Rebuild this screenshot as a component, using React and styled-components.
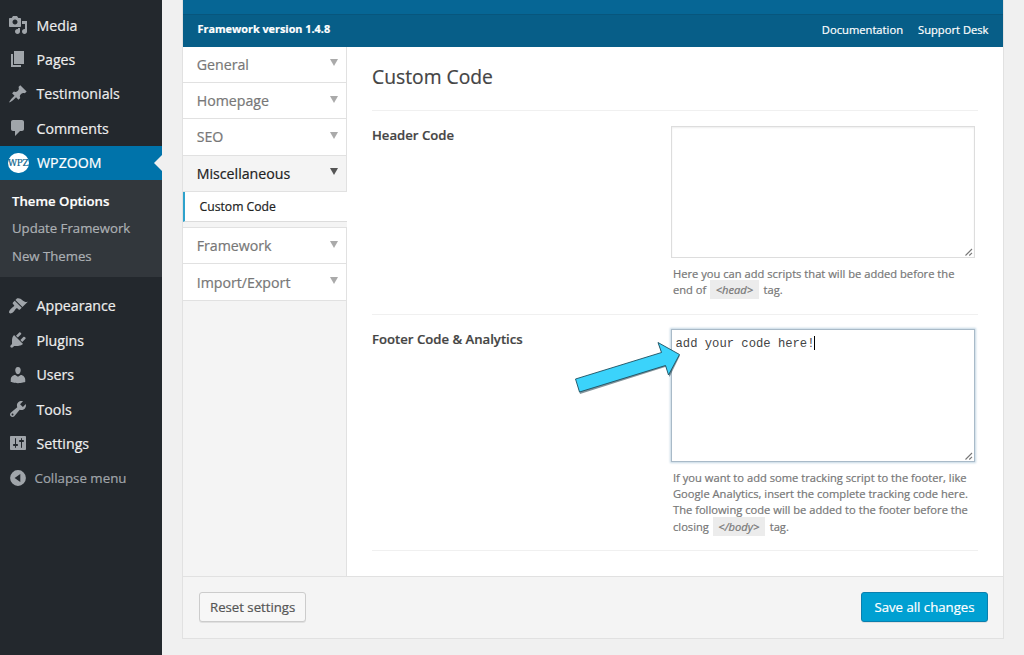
import styled, { createGlobalStyle } from 'styled-components';

const icons = {
    media: 'M13 11V4c0-.55-.45-1-1-1h-1.67L9 1H5L3.67 3H2c-.55 0-1 .45-1 1v7c0 .55.45 1 1 1h10c.55 0 1-.45 1-1zM7 4.5c1.38 0 2.5 1.12 2.5 2.5S8.38 9.5 7 9.5 4.5 8.38 4.5 7 5.62 4.5 7 4.5zM14 6h5v10.5c0 1.38-1.12 2.5-2.5 2.5S14 17.88 14 16.5s1.12-2.5 2.5-2.5c.17 0 .34.02.5.05V9h-3V6zm-4 8.05V13h2v3.5c0 1.38-1.12 2.5-2.5 2.5S7 17.88 7 16.5 8.12 14 9.5 14c.17 0 .34.02.5.05z',
    pages: 'M6 15V2h10v13H6zm-1 1h8v2H3V5h2v11z',
    pin: 'M10.44 3.02l1.82-1.82 6.36 6.35-1.83 1.82c-1.05-.68-2.48-.57-3.41.36l-.75.75c-.92.93-1.04 2.35-.35 3.41l-1.83 1.82-2.41-2.41-2.8 2.79c-.42.42-3.38 2.71-3.8 2.29s1.86-3.39 2.28-3.81l2.79-2.79L4.1 9.36l1.83-1.82c1.05.69 2.48.57 3.4-.36l.75-.75c.93-.92 1.05-2.35.36-3.41z',
    comments: 'M5 2h9c1.1 0 2 .9 2 2v7c0 1.1-.9 2-2 2h-2l-5 5v-5H5c-1.1 0-2-.9-2-2V4c0-1.1.9-2 2-2z',
    appearance: 'M14.48 11.06L7.41 3.99l1.5-1.5c.5-.56 2.3-.47 3.51.32 1.21.8 1.43 1.28 2.91 2.1 1.18.64 2.45 1.26 4.45.85zm-.71.71L6.7 4.7 4.93 6.47c-.39.39-.39 1.02 0 1.41l1.06 1.06c.39.39.39 1.03 0 1.42-.6.6-1.43 1.11-2.21 1.69-.35.26-.7.53-1.01.84C1.43 14.23.4 16.08 1.4 17.07c.99 1 2.84-.03 4.18-1.36.31-.31.58-.66.85-1.02.57-.78 1.08-1.61 1.69-2.21.39-.39 1.02-.39 1.41 0l1.06 1.06c.39.39 1.02.39 1.41 0z',
    plugins: 'M13.11 4.36L9.87 7.6 8 5.73l3.24-3.24c.35-.34 1.05-.2 1.56.32.52.51.66 1.21.31 1.55zm-8 1.77l.91-1.12 9.01 9.01-1.19.84c-.71.71-2.63 1.16-3.82 1.16H6.14L4.9 17.26c-.59.59-1.54.59-2.12 0-.59-.58-.59-1.53 0-2.12l1.24-1.24v-3.88c0-1.13.4-3.19 1.09-3.89zm7.26 3.97l3.24-3.24c.34-.35 1.04-.21 1.55.31.52.51.66 1.21.31 1.55l-3.24 3.25z',
    users: 'M10 9.25c-2.27 0-2.73-3.44-2.73-3.44C7 4.02 7.82 2 9.97 2c2.16 0 2.98 2.02 2.71 3.81 0 0-.41 3.44-2.68 3.44zm0 2.57L12.72 10c2.39 0 4.52 2.33 4.52 4.53v2.49s-3.65 1.13-7.24 1.13c-3.65 0-7.24-1.13-7.24-1.13v-2.49c0-2.25 1.94-4.48 4.47-4.48z',
    tools: 'M16.68 9.77c-1.34 1.34-3.3 1.67-4.95.99l-5.41 6.52c-.99.99-2.59.99-3.58 0s-.99-2.59 0-3.57l6.52-5.42c-.68-1.65-.35-3.61.99-4.95 1.28-1.28 3.12-1.62 4.72-1.06l-2.89 2.89 2.82 2.82 2.86-2.87c.53 1.58.18 3.39-1.08 4.65zM3.81 16.21c.4.39 1.04.39 1.43 0 .4-.4.4-1.04 0-1.43-.39-.4-1.03-.4-1.43 0-.39.39-.39 1.03 0 1.43z',
    settings: 'M18 16V4c0-.55-.45-1-1-1H3c-.55 0-1 .45-1 1v12c0 .55.45 1 1 1h14c.55 0 1-.45 1-1zM8 11h1c.55 0 1 .45 1 1s-.45 1-1 1H8v1.5c0 .28-.22.5-.5.5s-.5-.22-.5-.5V13H6c-.55 0-1-.45-1-1s.45-1 1-1h1V5.5c0-.28.22-.5.5-.5s.5.22.5.5V11zm5-2h-1c-.55 0-1-.45-1-1s.45-1 1-1h1V5.5c0-.28.22-.5.5-.5s.5.22.5.5V7h1c.55 0 1 .45 1 1s-.45 1-1 1h-1v5.5c0 .28-.22.5-.5.5s-.5-.22-.5-.5V9z',
    collapse: 'M10 2.1a7.9 7.9 0 1 0 0 15.8 7.9 7.9 0 0 0 0-15.8zM12.3 6v8L6.6 10z',
};

const topMenu = [
    { icon: 'media', label: 'Media' },
    { icon: 'pages', label: 'Pages' },
    { icon: 'pin', label: 'Testimonials' },
    { icon: 'comments', label: 'Comments' },
];

const bottomMenu = [
    { icon: 'appearance', label: 'Appearance' },
    { icon: 'plugins', label: 'Plugins' },
    { icon: 'users', label: 'Users' },
    { icon: 'tools', label: 'Tools' },
    { icon: 'settings', label: 'Settings' },
];

const Icon = ({ name }) => (
    <MenuIcon viewBox="0 0 20 20">
        <path fillRule="evenodd" d={icons[name]} />
    </MenuIcon>
);

const MenuEntry = ({ icon, label }) => (
    <MenuItem>
        <Icon name={icon} />
        {label}
    </MenuItem>
);

const Tab = ({ label, active }) => (
    <TabItem $active={active}>
        {label}
        <TabArrow $active={active} />
    </TabItem>
);

const ResizeGrip = () => (
    <Grip viewBox="0 0 8 8">
        <path d="M0.5 7.5L7 1M4.3 7.5L7 4.8" fill="none" stroke="#777" strokeWidth="1.1" />
    </Grip>
);

const App = () => {
    return (
        <Page>
            <GlobalStyle />
            <AdminMenu>
                {topMenu.map((item) => <MenuEntry key={item.label} {...item} />)}
                <MenuItem $current>
                    <Logo>WPZ</Logo>
                    WPZOOM
                    <Notch />
                </MenuItem>
                <Submenu>
                    <SubmenuItem $current>Theme Options</SubmenuItem>
                    <SubmenuItem>Update Framework</SubmenuItem>
                    <SubmenuItem>New Themes</SubmenuItem>
                </Submenu>
                {bottomMenu.map((item) => <MenuEntry key={item.label} {...item} />)}
                <CollapseItem>
                    <Icon name="collapse" />
                    Collapse menu
                </CollapseItem>
            </AdminMenu>

            <Panel>
                <PanelTop />
                <PanelHeader>
                    <Version>Framework version 1.4.8</Version>
                    <HeaderLinks>
                        <HeaderLink>Documentation</HeaderLink>
                        <HeaderLink>Support Desk</HeaderLink>
                    </HeaderLinks>
                </PanelHeader>
                <PanelBody>
                    <Tabs>
                        <Tab label="General" />
                        <Tab label="Homepage" />
                        <Tab label="SEO" />
                        <Tab label="Miscellaneous" active />
                        <SubTab>Custom Code</SubTab>
                        <Tab label="Framework" />
                        <Tab label="Import/Export" />
                    </Tabs>
                    <Content>
                        <Title>Custom Code</Title>
                        <Field $height={204}>
                            <Label>Header Code</Label>
                            <Control>
                                <CodeBox><ResizeGrip /></CodeBox>
                                <Help>
                                    Here you can add scripts that will be added before the<br />
                                    end of <Code>&lt;head&gt;</Code> tag.
                                </Help>
                            </Control>
                        </Field>
                        <Field $height={237}>
                            <Label>Footer Code &amp; Analytics</Label>
                            <Control>
                                <CodeBox $focused>
                                    add your code here!<Caret />
                                    <ResizeGrip />
                                </CodeBox>
                                <Pointer viewBox="0 0 110 56">
                                    <path d="M3.5 39.5L89 13.3 85.5 3 107 14.5 96.5 36 93 25.8 7 53z" fill="#1d3d48" opacity="0.55" />
                                    <path d="M2.5 38L88.5 11.5 85 1.5 106.5 13.5 95.5 34 92.5 24.5 6.5 51z" fill="#3bd3fb" stroke="#1d4f60" strokeWidth="0.9" />
                                </Pointer>
                                <Help>
                                    If you want to add some tracking script to the footer, like<br />
                                    Google Analytics, insert the complete tracking code here.<br />
                                    The following code will be added to the footer before the<br />
                                    closing <Code>&lt;/body&gt;</Code> tag.
                                </Help>
                            </Control>
                        </Field>
                    </Content>
                </PanelBody>
                <PanelFooter>
                    <Button>Reset settings</Button>
                    <Button $primary>Save all changes</Button>
                </PanelFooter>
            </Panel>
        </Page>
    );
};

const GlobalStyle = createGlobalStyle`
    * {
        box-sizing: border-box;
    }

    body {
        margin: 0;
        background: #f0f0f0;
        font-family: 'Open Sans', sans-serif;
        -webkit-text-stroke: 0.2px;
        overflow: hidden;
    }
`;

const Page = styled.div`
    display: flex;
    height: 655px;
`;

const AdminMenu = styled.nav`
    width: 162px;
    flex-shrink: 0;
    padding-top: 8px;
    background: #23282d;
`;

const MenuItem = styled.div`
    position: relative;
    display: flex;
    align-items: center;
    height: 34.45px;
    padding: 0 0 0.4px 8px;
    gap: 8.5px;
    font-size: 14.2px;
    white-space: nowrap;
    color: ${(props) => (props.$current ? '#fff' : '#eee')};
    background: ${(props) => (props.$current ? '#0073aa' : 'transparent')};
`;

const CollapseItem = styled(MenuItem)`
    gap: 6.5px;
    padding-bottom: 0;
    font-size: 13.3px;
    color: #a0a5aa;
`;

const MenuIcon = styled.svg`
    width: 20px;
    height: 20px;
    flex-shrink: 0;
    fill: #a0a5aa;
`;

const Logo = styled.div`
    display: flex;
    align-items: center;
    justify-content: center;
    width: 20.5px;
    height: 20.5px;
    border-radius: 50%;
    background: #fff;
    color: #0b5f8a;
    font: 8.8px 'DejaVu Serif', serif;
    letter-spacing: -0.2px;
`;

const Notch = styled.span`
    position: absolute;
    right: 0;
    top: 9px;
    border: 8px solid transparent;
    border-left-width: 0;
    border-right-color: #f0f0f0;
`;

const Submenu = styled.div`
    height: 97.3px;
    margin-bottom: 11.2px;
    padding: 7.6px 0 0 12px;
    background: #32373c;
`;

const SubmenuItem = styled.div`
    height: 27.4px;
    line-height: 27.4px;
    font-size: 13.2px;
    font-weight: ${(props) => (props.$current ? 600 : 400)};
    color: ${(props) => (props.$current ? '#fff' : '#acb0b4')};
`;

const Panel = styled.main`
    width: 822px;
    height: 639px;
    margin-left: 20px;
    display: flex;
    flex-direction: column;
    border: 1px solid #e1e1e1;
    border-top: 0;
    background: #f4f4f4;
`;

const PanelTop = styled.div`
    height: 14px;
    flex-shrink: 0;
    background: #066695;
`;

const PanelHeader = styled.header`
    display: flex;
    justify-content: space-between;
    align-items: center;
    height: 32.5px;
    flex-shrink: 0;
    padding: 0 14.5px 2px;
    background: #075e88;
    border-top: 1px solid #07567d;
    color: #fff;
`;

const Version = styled.div`
    font-size: 10.85px;
    font-weight: 700;
    padding-bottom: 2px;
`;

const HeaderLinks = styled.div`
    display: flex;
    gap: 15px;
`;

const HeaderLink = styled.a`
    font-size: 11.2px;
    font-weight: 500;
`;

const PanelBody = styled.div`
    display: flex;
    height: 529.5px;
`;

const Tabs = styled.aside`
    width: 164px;
    flex-shrink: 0;
    border-right: 1px solid #e1e1e1;
`;

const TabItem = styled.div`
    display: flex;
    justify-content: space-between;
    align-items: center;
    height: 36.4px;
    padding: 0 8px 0 13.7px;
    border-bottom: 1px solid #e1e1e1;
    font-size: 14.2px;
    color: ${(props) => (props.$active ? '#222' : '#777')};
    background: ${(props) => (props.$active ? '#f4f4f4' : '#fff')};
`;

const TabArrow = styled.span`
    margin-bottom: 3px;
    border: 4px solid transparent;
    border-top: 7px solid ${(props) => (props.$active ? '#555' : '#aaa')};
    border-bottom: 0;
`;

const SubTab = styled.div`
    height: 30px;
    line-height: 29px;
    margin: 0 -1px 6px 0;
    padding-left: 14.5px;
    border-left: 2px solid #2ea2cc;
    border-bottom: 1px solid #dcdcdc;
    box-shadow: 0 5px 0 #f4f4f4, 0 6px 0 #e1e1e1;
    background: #fff;
    font-size: 12.2px;
    color: #222;
`;

const Content = styled.section`
    flex: 1;
    padding: 0 25px;
    background: #fff;
`;

const Title = styled.h1`
    height: 63.5px;
    margin: 0;
    line-height: 59px;
    font-size: 19.3px;
    font-weight: 400;
    color: #444;
`;

const Field = styled.div`
    display: flex;
    justify-content: space-between;
    height: ${(props) => props.$height}px;
    padding: 15px 3px 0 0;
    border-top: 1px solid #f0f0f0;

    &:last-child {
        border-bottom: 1px solid #f0f0f0;
    }
`;

const Label = styled.div`
    font-size: 13.15px;
    font-weight: 600;
    line-height: 18px;
    color: #444;
`;

const Control = styled.div`
    position: relative;
    width: 304px;
`;

const CodeBox = styled.div`
    position: relative;
    height: ${(props) => (props.$focused ? 133 : 132)}px;
    margin-top: ${(props) => (props.$focused ? -1 : 0)}px;
    padding: ${(props) => (props.$focused ? 6 : 5)}px 3.5px;
    border: 1px solid ${(props) => (props.$focused ? '#a9bac8' : '#ddd')};
    box-shadow: ${(props) => (props.$focused ? '0 0 2px 1px #c3d6e3' : 'inset 0 1px 2px rgba(0, 0, 0, 0.07)')};
    background: #fff;
    font: 12.2px/17px 'Liberation Mono', monospace;
    -webkit-text-stroke: 0;
    color: #444;
`;

const Caret = styled.span`
    display: inline-block;
    width: 1px;
    height: 14px;
    background: #000;
    vertical-align: -3px;
`;

const Grip = styled.svg`
    position: absolute;
    right: 1px;
    bottom: 1px;
    width: 8px;
    height: 8px;
`;

/* arrow lies over the left edge of the code box */
const Pointer = styled.svg`
    position: absolute;
    left: -98px;
    top: 11px;
    width: 110px;
    height: 56px;
`;

const Help = styled.p`
    margin: 8px 0 0 2px;
    font-size: 11.17px;
    line-height: 16.2px;
    white-space: nowrap;
    color: #777;
`;

const Code = styled.code`
    margin: 0 2px 0 1px;
    padding: 2px 5.5px;
    background: #ececec;
    font-family: 'Open Sans', sans-serif;
    font-style: italic;
    font-weight: 500;
`;

const PanelFooter = styled.footer`
    display: flex;
    justify-content: space-between;
    align-items: center;
    flex: 1;
    padding: 0 15.5px 1px 16px;
    border-top: 1px solid #e1e1e1;
`;

const Button = styled.button`
    height: 30px;
    padding: 0 ${(props) => (props.$primary ? 12 : 10)}px 1px;
    border: 1px solid ${(props) => (props.$primary ? '#0a7fae' : '#ccc')};
    border-radius: 3px;
    box-shadow: 0 1px 0 rgba(0, 0, 0, 0.08);
    background: ${(props) => (props.$primary ? '#00a0d2' : '#f7f7f7')};
    color: ${(props) => (props.$primary ? '#fff' : '#555')};
    font-family: 'Open Sans', sans-serif;
    font-size: 13.2px;
    -webkit-text-stroke: 0.2px;
`;

export default App;
